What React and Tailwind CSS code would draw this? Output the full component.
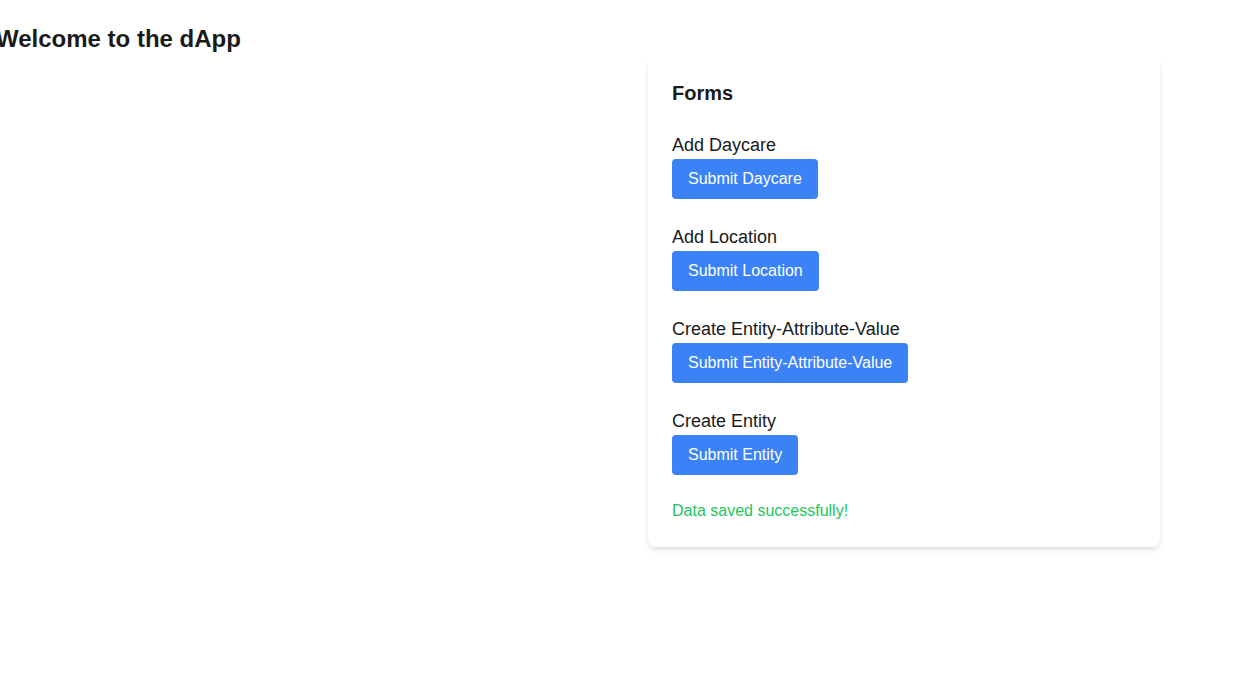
const sections = [
  { label: "Add Daycare", button: "Submit Daycare" },
  { label: "Add Location", button: "Submit Location" },
  { label: "Create Entity-Attribute-Value", button: "Submit Entity-Attribute-Value" },
  { label: "Create Entity", button: "Submit Entity" },
];

const App = () => {
  return (
    <div className="min-h-screen overflow-hidden bg-white text-[#1a1a1a]" style={{ fontFamily: '"Liberation Sans", Arial, sans-serif' }}>
      <h1 className="-ml-[4px] pt-[23px] text-2xl font-bold leading-8">Welcome to the dApp</h1>
      <div className="grid grid-cols-[648px_512px]">
        <div></div>
        <div className="rounded-lg bg-white p-6 shadow-md">
          <h2 className="mb-6 text-xl font-bold leading-7">Forms</h2>
          {sections.map((s) => (
            <div key={s.label} className="mb-6">
              <p className="text-lg leading-7">{s.label}</p>
              <button className="rounded bg-[#3b82f6] px-4 py-2 text-base leading-6 text-white">
                {s.button}
              </button>
            </div>
          ))}
          <p className="text-base leading-6 text-[#22c55e]">Data saved successfully!</p>
        </div>
      </div>
    </div>
  );
};

export default App;
